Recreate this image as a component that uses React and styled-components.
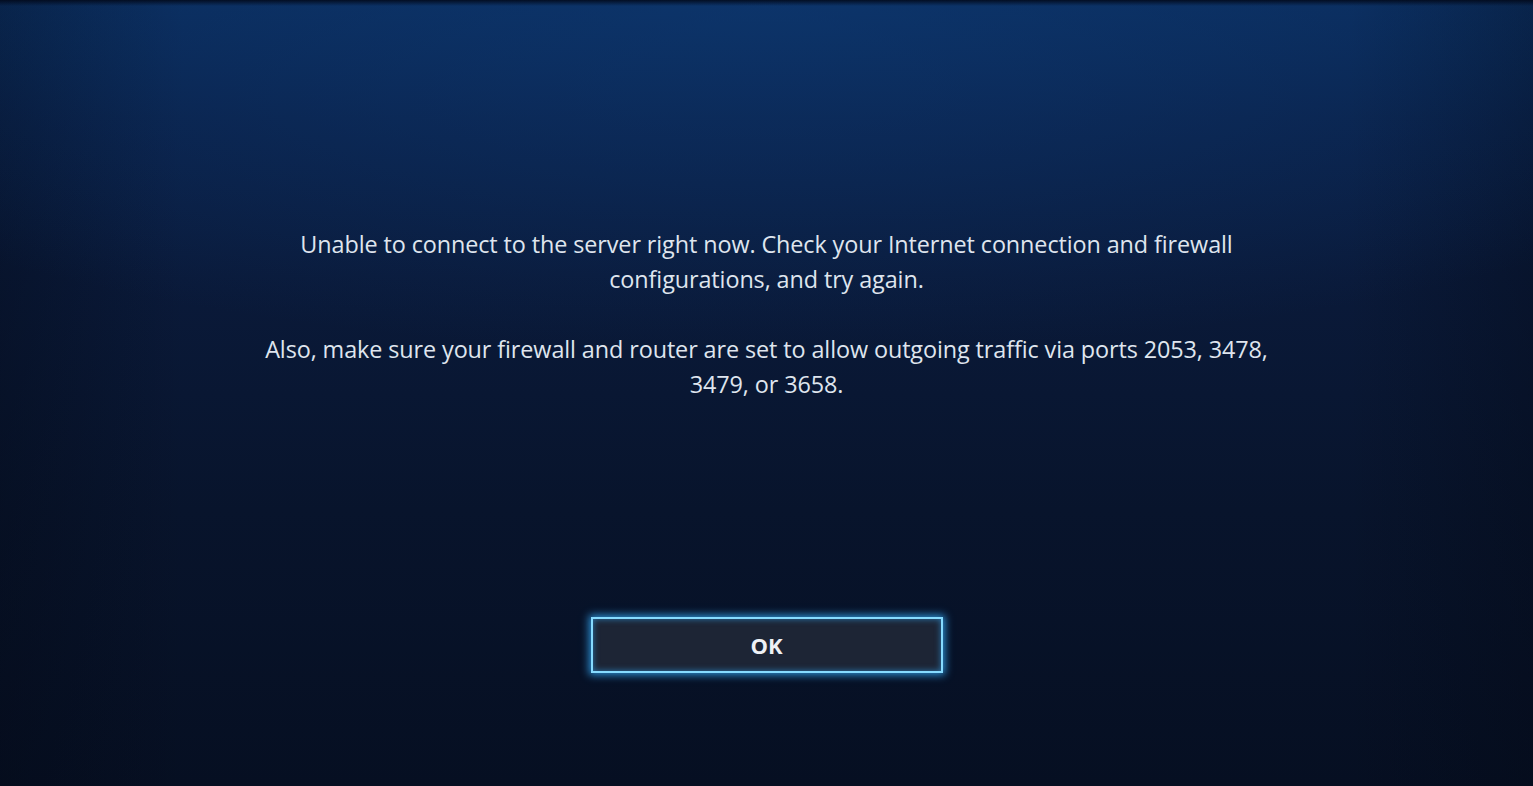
import styled, { createGlobalStyle } from "styled-components";

const Global = createGlobalStyle`
    html, body { margin:0; padding:0; height:100%; }
    body { background:#07122a; }
`;

const Screen = styled.div`
    position: relative;
    width: 100vw;
    height: 100vh;
    overflow: hidden;
    display: flex;
    flex-direction: column;
    align-items: center;
    background:
        linear-gradient(180deg, rgba(2,10,28,0.9) 0px, rgba(2,10,28,0) 6px),
        radial-gradient(ellipse 75% 45% at 50% 0%, rgba(14,60,120,0.55), rgba(14,60,120,0) 100%),
        linear-gradient(90deg, rgba(3,8,20,0.35) 0%, rgba(3,8,20,0) 12%, rgba(3,8,20,0) 88%, rgba(3,8,20,0.35) 100%),
        linear-gradient(180deg, #0a2b5a 0%, #0a2149 15%, #0a1a3a 35%, #08142c 65%, #060f22 100%);
    font-family: "Open Sans", "Noto Sans", sans-serif;
    color: #dfe5ee;
`;

const Message = styled.div`
    margin-top: 227px;
    width: 1020px;
    text-align: center;
    font-size: 23.4px;
    line-height: 35px;
    letter-spacing: -0.1px;
    p { margin: 0 0 35px; }
`;

const OkButton = styled.button`
    margin-top: 180px;
    width: 352px;
    height: 56px;
    box-sizing: border-box;
    background: #1d2535;
    border: 2px solid #86dbff;
    box-shadow: 0 0 8px 2px rgba(50,165,240,0.85), inset 0 0 6px rgba(50,165,240,0.65);
    color: #eef1f5;
    font-family: "Open Sans", "Noto Sans", sans-serif;
    font-weight: 700;
    font-size: 22px;
    cursor: pointer;
`;

export default function App(){
    return (
        <Screen>
            <Global/>
            <Message>
                <p>Unable to connect to the server right now. Check your Internet connection and firewall configurations, and try again.</p>
                <p>Also, make sure your firewall and router are set to allow outgoing traffic via ports 2053, 3478, 3479, or 3658.</p>
            </Message>
            <OkButton>OK</OkButton>
        </Screen>
    );
}
